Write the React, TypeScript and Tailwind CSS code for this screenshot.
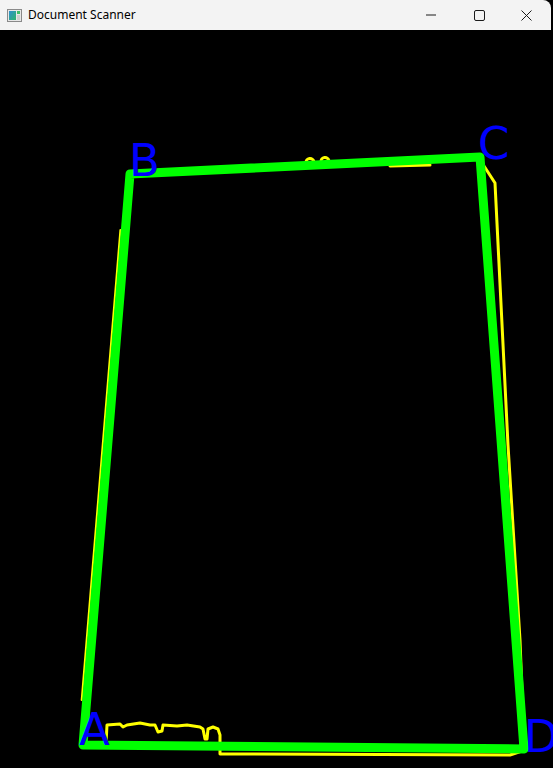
import React from "react";

function AppIcon() {
  return (
    <svg width="15" height="13" viewBox="0 0 15 13">
      <defs>
        <linearGradient id="g1" x1="0" y1="0" x2="1" y2="1">
          <stop offset="0" stopColor="#2f8fd0" />
          <stop offset="1" stopColor="#2fb56a" />
        </linearGradient>
      </defs>
      <rect x="0.5" y="0.5" width="14" height="12" fill="#e8e8e8" stroke="#8a8a8a" />
      <rect x="2" y="2" width="7" height="9" fill="url(#g1)" />
      <rect x="10" y="2" width="3" height="3" fill="#3fbf6a" />
      <rect x="10" y="6" width="3" height="5" fill="#cfcfcf" />
    </svg>
  );
}

export default function App() {
  const green = "#00ff00";
  const yellow = "#ffff00";
  const blue = "#0000ff";
  return (
    <div className="w-[553px] h-[768px] bg-black flex flex-col overflow-hidden">
      <div className="h-[30px] w-[551px] bg-[#f3f3f3] rounded-tr-[8px] flex items-center shrink-0">
        <div className="pl-[7px] pr-[6px] flex items-center">
          <AppIcon />
        </div>
        <span
          className="text-[12px] text-black leading-none"
          style={{ fontFamily: '"Noto Sans", "Open Sans", sans-serif' }}
        >
          Document Scanner
        </span>
        <div className="ml-auto flex h-full">
          <div className="w-[48px] h-full flex items-center justify-center">
            <svg width="10" height="10" viewBox="0 0 10 10">
              <line x1="0" y1="5" x2="10" y2="5" stroke="#1a1a1a" strokeWidth="1" />
            </svg>
          </div>
          <div className="w-[48px] h-full flex items-center justify-center">
            <svg width="11" height="11" viewBox="0 0 11 11">
              <rect x="0.5" y="0.5" width="10" height="10" rx="1.5" fill="none" stroke="#1a1a1a" strokeWidth="1" />
            </svg>
          </div>
          <div className="w-[48px] h-full flex items-center justify-center pr-[2px]">
            <svg width="11" height="11" viewBox="0 0 11 11">
              <path d="M0.5 0.5 L10.5 10.5 M10.5 0.5 L0.5 10.5" stroke="#1a1a1a" strokeWidth="1" fill="none" />
            </svg>
          </div>
        </div>
      </div>
      <div className="flex-1 bg-black relative">
        <svg width="553" height="738" viewBox="0 30 553 738" className="block">
          {/* yellow contour */}
          <g fill="none" stroke={yellow} strokeWidth="3" strokeLinejoin="round" strokeLinecap="round">
            <line x1="120.4" y1="230" x2="81.7" y2="700" strokeWidth="2" />
            <polyline points="484,166 495,183 508,445 520,640 524,745" />
            <polyline points="106,744 107,725 120,724 123,727 127,725 140,723 150,725 155,725 158,732 162,731 163,725 177,726 187,725 200,727 203,729 205,739 207,739 208,729 213,727 218,729 220,735 220,754 510,755 522,751" />
            <line x1="390" y1="166" x2="430" y2="165" />
            <path d="M306 163 A4 4 0 0 1 314 162" />
            <path d="M321 162 A4 4 0 0 1 329 161" />
          </g>
          {/* green quad */}
          <polygon
            points="83,745 130,174 480,157 524,749"
            fill="none"
            stroke={green}
            strokeWidth="9"
            strokeLinejoin="round"
          />
          <g fill={blue} style={{ fontFamily: '"DejaVu Sans", sans-serif' }} fontSize="45">
            <text x="79" y="745">A</text>
            <text x="129" y="176">B</text>
            <text x="478" y="159">C</text>
            <text x="524" y="752">D</text>
          </g>
        </svg>
      </div>
    </div>
  );
}
